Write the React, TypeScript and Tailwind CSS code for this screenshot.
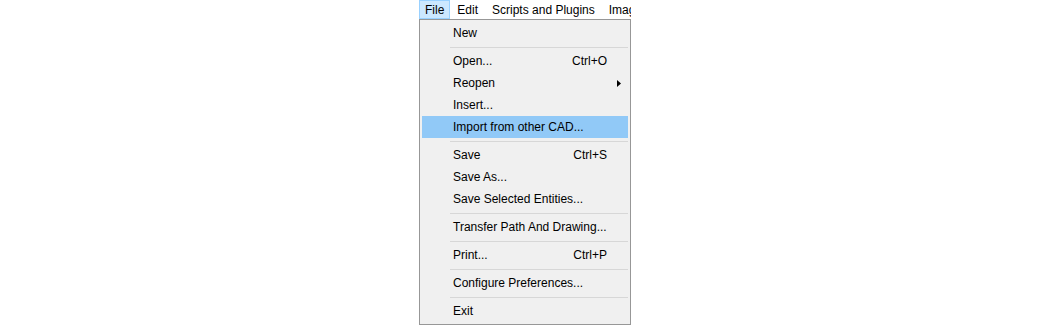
const items: (
  | { label: string; shortcut?: string; submenu?: boolean; active?: boolean }
  | "sep"
)[] = [
  { label: "New" },
  "sep",
  { label: "Open...", shortcut: "Ctrl+O" },
  { label: "Reopen", submenu: true },
  { label: "Insert..." },
  { label: "Import from other CAD...", active: true },
  "sep",
  { label: "Save", shortcut: "Ctrl+S" },
  { label: "Save As..." },
  { label: "Save Selected Entities..." },
  "sep",
  { label: "Transfer Path And Drawing..." },
  "sep",
  { label: "Print...", shortcut: "Ctrl+P" },
  "sep",
  { label: "Configure Preferences..." },
  "sep",
  { label: "Exit" },
];

const menuBar = ["File", "Edit", "Scripts and Plugins", "Image"];

export default function App() {
  return (
    <div
      className="flex h-[325px] w-full justify-center bg-white text-[12px] text-black"
      style={{ fontFamily: '"Liberation Sans", Arial, sans-serif' }}
    >
      <div className="flex w-[212px] flex-col overflow-hidden">
        {/* menu bar */}
        <div className="flex h-[19px] shrink-0 items-center whitespace-nowrap">
          {menuBar.map((m, i) => (
            <div
              key={m}
              className={
                i === 0
                  ? "flex h-full items-center border border-[#99d1ff] bg-[#cce8ff] px-[5px]"
                  : "flex h-full items-center px-[7px]"
              }
            >
              {m}
            </div>
          ))}
        </div>

        {/* dropdown */}
        <div className="flex flex-1 flex-col border border-[#979797] bg-[#f0f0f0] px-[2px] pt-[2px] pb-[1px]">
          {items.map((it, i) =>
            it === "sep" ? (
              <div key={i} className="flex h-[6px] items-center">
                <div className="ml-[28px] h-px flex-1 bg-[#d7d7d7]" />
              </div>
            ) : (
              <div
                key={i}
                className={`relative flex h-[22px] shrink-0 items-center pl-[31px] pr-[21px] ${
                  it.active ? "bg-[#91c9f7]" : ""
                }`}
              >
                <span className="flex-1">{it.label}</span>
                {it.shortcut && <span>{it.shortcut}</span>}
                {it.submenu && (
                  <svg
                    width="4"
                    height="7"
                    viewBox="0 0 4 7"
                    className="absolute right-[7px] top-[8px]"
                  >
                    <path d="M0 0 L4 3.5 L0 7 Z" fill="#000" />
                  </svg>
                )}
              </div>
            )
          )}
        </div>
      </div>
    </div>
  );
}
